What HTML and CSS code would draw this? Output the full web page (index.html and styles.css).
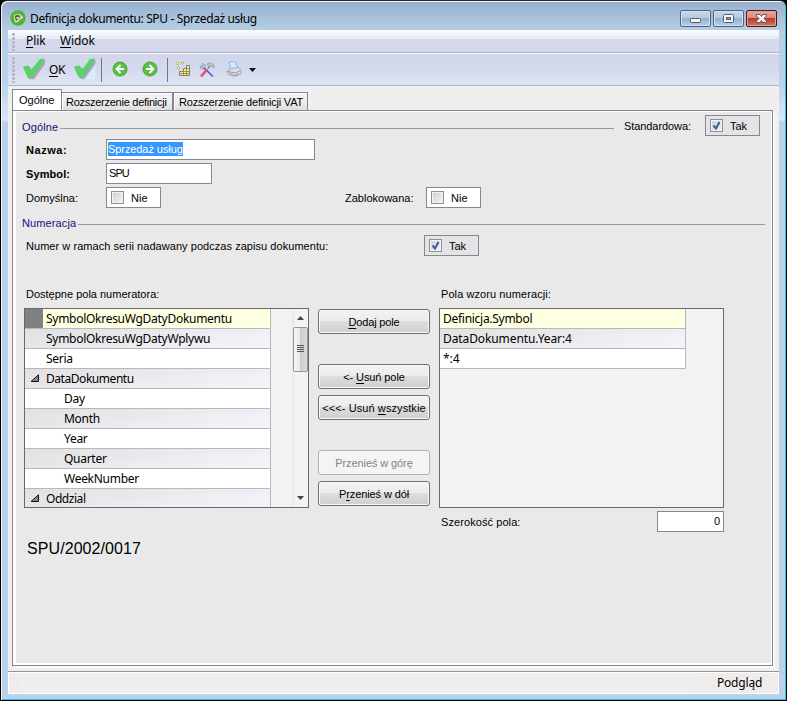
FILE: index.html
```html
<!DOCTYPE html>
<html lang="pl">
<head>
<meta charset="utf-8">
<title>Definicja dokumentu: SPU - Sprzedaż usług</title>
<link rel="stylesheet" href="styles.css">
</head>
<body>
<div class="window">
  <header class="titlebar">
    <svg class="app-icon" viewBox="0 0 16 16"><circle cx="8" cy="8" r="7.700" fill="#52b52e"/><path d="M3.500 5.500 L7 3.500 L11 5 L13.500 7.500 L10 9.500 L8 12 L5 12.500 Z" fill="#dbe5c9"/><path d="M4.500 6 L7 4.500 L10.500 6 L9 9 L6 11 Z" fill="#5d6656"/><path d="M6.500 7h2.500v2h-2.500z" fill="#c9d3bd"/></svg>
    <h1 class="title">Definicja dokumentu: SPU - Sprzedaż usług</h1>
    <div class="controls">
      <span class="control"><svg viewBox="0 0 29 15"><rect x="9.500" y="7.500" width="10" height="4" rx="1" fill="#f4f4f2" stroke="#555a6b"/></svg></span>
      <span class="control"><svg viewBox="0 0 29 15"><rect x="9.500" y="3.500" width="10" height="8" rx="1" fill="#f6f6f6" stroke="#555a6b"/><rect x="12.500" y="6.500" width="4" height="2" fill="#87aacd" stroke="#555a6b"/></svg></span>
      <span class="control control-close"><svg viewBox="0 0 29 15"><path d="M9.500 3.500h3.500l1.500 2 1.500-2h3.500v1.500l-2.500 2.500 2.500 2.500v1.500h-3.500l-1.500-2-1.500 2h-3.500V10l2.500-2.500L9.500 5z" fill="#f7f7f7" stroke="#655465"/></svg></span>
    </div>
  </header>
  <nav class="menubar">
    <span class="grip grip-menu"></span>
    <span class="menu menu-file"><u>P</u>lik</span>
    <span class="menu menu-view"><u>W</u>idok</span>
  </nav>
  <div class="toolbar">
    <span class="grip"></span>
    <svg class="tool tool-ok" width="24" height="24" viewBox="0 0 24 24"><path d="M2 12 L8 10 L11 14 L20 3 L23 3 L23 7 L12 22.500 L7 22 Z" fill="#a4a8b0"/><path d="M.8 9.500 L6.500 8.500 L9 13 L18 2 L22.500 1.500 L22 4.500 L9.500 21 L5.500 20.500 Z" fill="#5bd16a"/></svg>
    <span class="ok"><u>O</u>K</span>
    <svg class="tool tool-save" width="24" height="24" viewBox="0 0 24 24"><path d="M8 13L14 6h8.500v16.500H8z" fill="#bdd5f2"/><path d="M12 22.500L22.500 8v14.500z" fill="#dceafa"/><path d="M2 12 L8 10 L11 14 L20 3 L22.500 3 L22.500 6 L11 22 L7 21.500 Z" fill="#9fa8b2"/><path d="M.8 9.500 L6.500 8.500 L9 13 L17 2 L22 1.500 L21 4.500 L9.500 20.500 L5.500 20 Z" fill="#5bd16a"/></svg>
    <span class="separator"></span>
    <svg class="tool tool-back" width="16" height="16" viewBox="0 0 16 16"><circle cx="8" cy="8" r="7" fill="#58c143" stroke="#49a136"/><path d="M8.500 4L4.500 8l4 4M4.500 8H12" fill="none" stroke="#fff" stroke-width="1.800"/></svg>
    <svg class="tool tool-next" width="16" height="16" viewBox="0 0 16 16"><circle cx="8" cy="8" r="7" fill="#58c143" stroke="#49a136"/><path d="M7.500 4L11.500 8l-4 4M11.500 8H4" fill="none" stroke="#fff" stroke-width="1.800"/></svg>
    <span class="separator separator-two"></span>
    <svg class="tool tool-grid" width="16" height="16" viewBox="0 0 16 16"><g fill="#fff79a" stroke="#a99d4b" stroke-width=".8"><path d="M2.500 1l1.500 1.500L2.500 4 1 2.500zM7.500.5L9 2 7.500 3.500 6 2zM3.500 5.500L5 7 3.500 8.500 2 7z"/></g><path d="M4.500 10.500h4v-3h3v-3h3v10h-10z" fill="#ffef75" stroke="#858168"/><path d="M4.500 12.500h10M8.500 10.500h6M11.500 7.500h3M8.500 10.500v4M11.500 7.500v7" stroke="#858168" stroke-width=".8"/></svg>
    <svg class="tool tool-tools" width="16" height="16" viewBox="0 0 16 16"><path d="M1 4l2 1 1-1-1-2c3-1 4 2 3 3L4 7C2 7 1 6 1 4zM8 2c2-2 5-1 7 1v3l-2-2-3 1z" fill="#b9c5d1" stroke="#8292a3" stroke-width=".7"/><path d="M5 6l9 8.500" stroke="#4c52d8" stroke-width="1.700"/><path d="M11 4.500l-4 4" stroke="#8d96a5" stroke-width="1.500"/><path d="M7.500 8L2 14.500" stroke="#df5360" stroke-width="2.500"/></svg>
    <svg class="tool tool-print" width="16" height="16" viewBox="0 0 16 16"><path d="M3 1l6-1 3 7-7 2z" fill="#d0e7ff" stroke="#82b3e6" stroke-width=".8"/><path d="M1 10l4-2 7-2 3 3v4l-6 2.500-7-2z" fill="#dcdee1" stroke="#a0a4ac" stroke-width=".8"/><path d="M1.500 10.500l8 1.500 5-2.500M3 12.500l6 2 4-2" fill="none" stroke="#979ba3"/></svg>
    <svg class="tool tool-drop" width="7" height="4" viewBox="0 0 7 4"><path d="M0 0h7L3.500 4z" fill="#111"/></svg>
  </div>

  <main class="client">
    <div class="tabs">
      <span class="tab tab-active">Ogólne</span>
      <span class="tab tab-ext">Rozszerzenie definicji</span>
      <span class="tab tab-vat">Rozszerzenie definicji VAT</span>
    </div>
    <div class="panel"><form class="form">
      <div class="row row-group">
        <span class="legend legend-general">Ogólne</span><i class="rule"></i>
        <span class="label label-standard">Standardowa:</span>
        <span class="check check-locked check-standard"><i class="box"><svg viewBox="0 0 11 11"><path d="M2.500 5.500L5 8.500L8.500 2" fill="none" stroke="#40599c" stroke-width="2"/></svg></i>Tak</span>
      </div>
      <div class="row row-name"><b class="label label-first name">Nazwa:</b><span class="input input-name"><mark>Sprzedaż usług</mark></span></div>
      <div class="row row-symbol"><b class="label label-first symbol">Symbol:</b><span class="input input-symbol">SPU</span></div>
      <div class="row row-default">
        <span class="label label-first">Domyślna:</span>
        <span class="check"><i class="box"></i>Nie</span>
        <span class="label label-blocked">Zablokowana:</span>
        <span class="check check-blocked"><i class="box"></i>Nie</span>
      </div>
      <div class="row row-numbering"><span class="legend legend-number">Numeracja</span><i class="rule"></i></div>
      <div class="row row-series">
        <span class="label label-series">Numer w ramach serii nadawany podczas zapisu dokumentu:</span>
        <span class="check check-locked"><i class="box"><svg viewBox="0 0 11 11"><path d="M2.500 5.500L5 8.500L8.500 2" fill="none" stroke="#40599c" stroke-width="2"/></svg></i>Tak</span>
      </div>
      <div class="row row-heads"><span class="label head-left">Dostępne pola numeratora:</span><span class="label head-right">Pola wzoru numeracji:</span></div>
      <div class="lists">
        <div class="list list-fields">
          <div class="column">
            <div class="item item-current"><i class="marker"></i><span>SymbolOkresuWgDatyDokumentu</span></div>
            <div class="item item-alt">SymbolOkresuWgDatyWplywu</div>
            <div class="item">Seria</div>
            <div class="item item-alt item-open"><svg class="expander" viewBox="0 0 9 8"><path d="M1 7.500h7.500V.8z" fill="#888" stroke="#111"/></svg><span class="tight">DataDokumentu</span></div>
            <div class="item item-child">Day</div>
            <div class="item item-child item-alt">Month</div>
            <div class="item item-child">Year</div>
            <div class="item item-child item-alt">Quarter</div>
            <div class="item item-child">WeekNumber</div>
            <div class="item item-alt item-open"><svg class="expander" viewBox="0 0 9 8"><path d="M1 7.500h7.500V.8z" fill="#888" stroke="#111"/></svg><span class="tight">Oddzial</span></div>
          </div>
          <div class="scrollbar">
            <svg width="7" height="4" viewBox="0 0 7 4"><path d="M0 4h7L3.500 0z" fill="#444"/></svg>
            <div class="thumb"><i></i><i></i><i></i><i></i></div>
            <svg class="down" width="7" height="4" viewBox="0 0 7 4"><path d="M0 0h7L3.500 4z" fill="#444"/></svg>
          </div>
        </div>
        <div class="actions">
          <button type="button" class="btn-add"><u>D</u>odaj pole</button>
          <button type="button" class="btn-remove">&lt;- <u>U</u>suń pole</button>
          <button type="button" class="btn-clear">&lt;&lt;&lt;- Usuń <u>w</u>szystkie</button>
          <button type="button" class="btn-up" disabled>Przenieś w górę</button>
          <button type="button" class="btn-down">P<u>r</u>zenieś w dół</button>
        </div>
        <div class="list list-pattern">
          <div class="column">
            <div class="item item-current">Definicja.Symbol</div>
            <div class="item item-alt loose">DataDokumentu.Year:4</div>
            <div class="item loose">*:4</div>
          </div>
        </div>
      </div>
      <div class="row row-width"><span class="label label-width">Szerokość pola:</span><span class="input input-width">0</span></div>
      <output class="preview">SPU/2002/0017</output>
    </form></div>
  </main>
  <footer class="status"><span class="status-start"></span><span class="status-preview">Podgląd</span></footer>
</div>
</body>
</html>
```
FILE: styles.css
```css
* { box-sizing: border-box; }
body { margin: 0; background: #000; }
i { font-style: normal; }
u { text-underline-offset: 2px; text-decoration-thickness: 1px; }

.window {
  width: 787px; height: 701px;
  padding: 0 6px 6px 6px;
  border: 1px solid #000;
  border-top-color: #262329;
  border-radius: 7px 7px 0 0;
  background: linear-gradient(#96b0cd, #b7cee6 30px, #b9d1ea 80px, #d9e7f5 119px, #b9d1ea 121px);
  box-shadow: inset 1px 1px #f1f7fc, inset -1px -1px #31c3e0;
  display: flex; flex-direction: column;
  font: 12px/16px "Noto Sans", sans-serif;
  color: #000;
}
.titlebar { height: 29px; flex: none; display: flex; padding-left: 2px; margin-left: 1px; }
.app-icon { width: 16px; height: 16px; margin-top: 9px; }
.title { margin: 9px 0 0 4px; font-size: 12px; font-weight: 400; line-height: 17px; letter-spacing: -.37px; white-space: nowrap; }
.controls { margin: 9px 3px 0 auto; display: flex; gap: 2px; }
.control {
  width: 31px; height: 17px; border: 1px solid #52647c; border-radius: 2px;
  background: linear-gradient(#c5d8eb, #b3cae1 47%, #93b0cd 50%, #b5d0e7);
  box-shadow: inset 0 0 0 1px #cfe0ef;
}
.control svg { display: block; width: 29px; height: 15px; }
.control-close {
  border-color: #51131d;
  background: linear-gradient(#e9a99c, #db8576 47%, #b93c28 50%, #cf7660);
  box-shadow: inset 0 0 0 1px #e1a49a;
}

.menubar {
  height: 23px; flex: none; margin-left: 1px; width: 771px; display: flex;
  background: linear-gradient(#fcfdfe, #e4e9f4 9px, #d3d8ec 9px);
  border-bottom: 1px solid #adafb4;
}
.grip { width: 4px; height: 26px; margin: 3px 0 0 4px; flex: none; background: radial-gradient(circle at 1.500px 1.500px, #afb2c2 1.200px, transparent 1.600px) 0 0 / 4px 4px; }
.grip-menu { height: 18px; }
.menu { line-height: 22px; letter-spacing: -.1px; }
.menu-file { margin-left: 10px; width: 34px; }

.toolbar {
  height: 33px; flex: none; margin-left: 1px; width: 771px; display: flex;
  background: linear-gradient(#d1d6ea, #d4d9ed 50%, #e0e5f5);
  border-top: 1px solid #fff; border-bottom: 1px solid #adb4c5;
}
.tool { flex: none; }
.tool-ok { margin: 3px 0 0 6px; }
.ok { line-height: 31px; margin-left: 3px; width: 18px; letter-spacing: -.5px; }
.tool-save { margin: 3px 0 0 6px; }
.separator { width: 1px; height: 24px; margin: 4px 0 0 4px; background: #747684; flex: none; }
.tool-back { margin: 7px 0 0 10px; }
.tool-next { margin: 7px 0 0 14px; }
.separator-two { margin-left: 9px; }
.tool-grid { margin: 7px 0 0 7px; }
.tool-tools { margin: 8px 0 0 8px; }
.tool-print { margin: 7px 0 0 11px; }
.tool-drop { margin: 14px 0 0 7px; }

.client { margin-left: 1px; width: 771px; height: 585px; background: #efefef; padding-left: 4px; font-family: "Liberation Sans", sans-serif; font-size: 11px; line-height: 14px; }
.tabs { height: 24px; display: flex; align-items: flex-end; }
.tab { height: 18px; border: 1px solid #85858f; border-bottom: 0; background: linear-gradient(#f4f4f4, #eeeeee 50%, #dfdfdf); white-space: nowrap; line-height: 18px; padding-left: 4px; box-shadow: inset 1px 1px #fff; }
.tab-active { width: 50px; height: 21px; padding-left: 6px; background: #fff; line-height: 20px; }
.tab-ext { width: 111px; border-left: 0; letter-spacing: -.26px; }
.tab-vat { width: 135px; padding-left: 5px; letter-spacing: -.2px; }
.panel { width: 761px; height: 556px; border: 1px solid #85858f; background: #fff; padding: 1px 1px 2px 3px; box-shadow: 2px 2px #f9f9f9; }
.form { height: 551px; margin: 0; background: #e9e9e9; padding: 3px 6px 0 8px; }
.row { display: flex; height: 24px; align-items: flex-start; }
.label { line-height: 23px; white-space: nowrap; flex: none; }
.label-first { width: 80px; margin-left: 2px; }
.legend { color: #101080; line-height: 24px; flex: none; margin-left: -2px; letter-spacing: .12px; }
.rule { height: 1px; flex: 1; background: #999; margin: 13px 0 0 2px; }
.label-standard { margin-left: 10px; width: 81px; letter-spacing: -.08px; }
.check-standard { margin-right: 5px; }
.check { width: 55px; height: 21px; border: 1px solid #858793; background: #fff; display: flex; align-items: center; flex: none; padding-left: 4px; gap: 7px; }
.check-locked { background: #e4e4e7; }
.box { width: 13px; height: 13px; border: 1px solid #8e8f8f; background: linear-gradient(135deg, #c9ced5, #f5f5f5); box-shadow: inset 0 0 0 1px #f4f4f4; }
.box svg { width: 11px; height: 11px; display: block; }
.name { letter-spacing: .55px; }
.symbol { letter-spacing: .1px; }
.input { height: 21px; border: 1px solid #858793; background: #fff; padding: 0 1px; line-height: 18px; white-space: nowrap; }
.input-name { width: 209px; letter-spacing: -.08px; }
.input-symbol { width: 106px; letter-spacing: -.9px; padding-left: 2px; }
mark { background: #3399ff; color: #fff; display: inline-block; height: 14px; line-height: 14px; }
.label-blocked { margin-left: 184px; width: 81px; }
.row-numbering .rule { margin-top: 13px; }
.row-series { height: 48px; }
.label-series { margin-left: 2px; width: 398px; letter-spacing: .05px; }
.row-heads { height: 25px; }
.row-heads .label { line-height: 23px; }
.head-left { margin-left: 2px; width: 415px; }
.head-right { letter-spacing: .08px; }

.lists { display: flex; height: 200px; gap: 9px; }
.list { width: 285px; height: 200px; border: 1px solid #68696d; background: #f2f2f2; display: flex; overflow: hidden; flex: none; font: 12px/19px "Noto Sans", sans-serif; letter-spacing: -.28px; }
.column { width: 246px; flex: none; }
.item { height: 20px; display: flex; border: 1px solid #b8b8bb; border-width: 0 1px 1px 0; background: #fff; padding-left: 21px; white-space: nowrap; }
.item-alt { background: linear-gradient(170deg, #e1e1e2, #f4f4fc); }
.item-current { background: #ffffe1; }
.list-fields .item-current { padding-left: 0; }
.marker { width: 18px; height: 19px; background: #808080; margin-right: 3px; }
.item-open { padding-left: 5px; }
.tight { letter-spacing: -.45px; }
.loose { letter-spacing: -.1px; }
.expander { width: 9px; height: 8px; margin: 5px 7px 0 0; }
.item-child { padding-left: 39px; }
.list-pattern .item { padding-left: 3px; }
.scrollbar { width: 17px; height: 198px; margin-left: 21px; background: linear-gradient(90deg, #e6e6e6, #f3f3f3 4px); display: flex; flex-direction: column; align-items: center; padding-top: 7px; }
.thumb { width: 15px; height: 45px; margin-top: 7px; border: 1px solid #979797; border-radius: 2px; background: linear-gradient(90deg, #f7f7f7, #e8e8ea 48%, #cfcfd3 50%, #d9d9dc); padding: 17px 3px 0; }
.thumb i { display: block; height: 1px; background: #555; margin-bottom: 1px; }
.down { margin: auto 0 7px; }

.actions { width: 112px; padding-top: 1px; flex: none; }
.actions button { display: block; width: 112px; height: 25px; padding: 0; border: 1px solid #707070; border-radius: 3px; background: linear-gradient(#f3f3f3, #ebebeb 48%, #dddddd 50%, #cfcfcf); box-shadow: inset 0 0 0 1px #f9f9f9; color: #000; font: 11px/14px "Liberation Sans", sans-serif; white-space: nowrap; }
.actions .btn-add { letter-spacing: -.15px; }
.actions .btn-remove { margin-top: 30px; letter-spacing: -.1px; }
.actions .btn-clear { margin-top: 6px; letter-spacing: .08px; }
.actions .btn-up { margin-top: 30px; color: #838383; background: #f4f4f4; border-color: #adb2b5; letter-spacing: -.1px; }
.actions .btn-down { margin-top: 6px; letter-spacing: -.1px; }

.row-width { margin-top: 3px; height: 25px; }
.label-width { margin-left: 417px; width: 216px; letter-spacing: .08px; }
.input-width { width: 67px; text-align: right; padding-right: 3px; line-height: 19px; }
.preview { display: block; margin: 3px 0 0 3px; font-size: 16px; line-height: 20px; letter-spacing: .08px; }

.status { height: 23px; flex: none; margin-left: 1px; width: 771px; border-top: 1px solid #949494; background: #efefef; box-shadow: inset 1px 1px #fff, inset -1px -1px #fff; display: flex; justify-content: space-between; padding: 1px; }
.status-start { width: 10px; background: #f0ecec; }
.status-preview { width: 83px; background: #f0ecec; padding-left: 22px; line-height: 19px; letter-spacing: -.2px; }
```
